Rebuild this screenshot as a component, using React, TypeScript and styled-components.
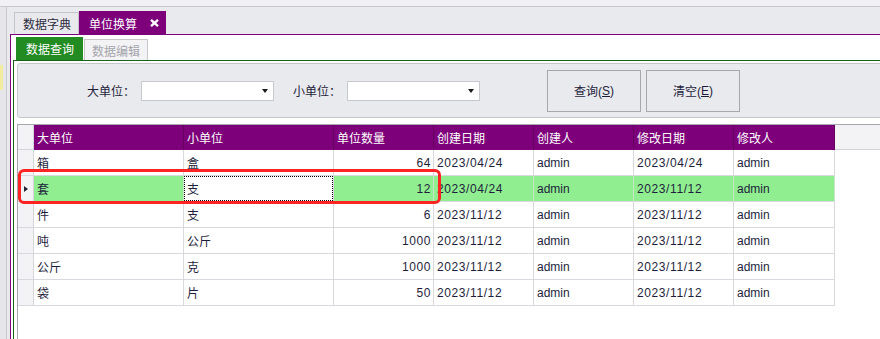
import React from "react";
import styled, { createGlobalStyle } from "styled-components";

const GlobalStyle = createGlobalStyle`
  html, body { margin: 0; padding: 0; background: #e9eaee; }
  * { box-sizing: border-box; }
`;

const PURPLE = "#7d007a";
const TEXT = "#1e1e3c";

const Root = styled.div`
  width: 880px;
  height: 339px;
  display: flex;
  flex-direction: column;
  background: #e9eaee;
  overflow: hidden;
  font-family: "Liberation Sans", "Noto Sans CJK SC", sans-serif;
  font-size: 12px;
  color: ${TEXT};
`;

const TopStrip = styled.div`
  height: 7px;
  flex-shrink: 0;
  background: #f1f1f5;
  border-bottom: 1px solid #c8c8d0;
`;

const Body = styled.div`
  flex: 1;
  display: flex;
  min-height: 0;
`;

const LeftDock = styled.div`
  width: 7px;
  flex-shrink: 0;
  background: #e5e5ea;
  border-right: 1px solid #c8c8d0;
  padding-top: 58px;
`;

const DockMarker = styled.div`
  width: 3px;
  height: 25px;
  background: #f1eb9e;
`;

const Main = styled.div`
  flex: 1;
  min-width: 0;
  display: flex;
  flex-direction: column;
  padding-left: 3px;
`;

const TabStrip = styled.div`
  height: 27px;
  flex-shrink: 0;
  display: flex;
  align-items: flex-end;
  padding-left: 4px;
`;

const DocTab = styled.div<{ $active?: boolean }>`
  height: ${(p) => (p.$active ? 23 : 22)}px;
  display: flex;
  align-items: center;
  border: 1px solid ${(p) => (p.$active ? PURPLE : "#c4c4cc")};
  border-bottom: none;
  background: ${(p) => (p.$active ? PURPLE : "#e9e9ed")};
  color: ${(p) => (p.$active ? "#ffffff" : "#2c2c40")};
  padding: ${(p) => (p.$active ? "0 6px 0 9px" : "0 7px 0 8px")};
  gap: 13px;
  white-space: nowrap;
`;

const CloseIcon = () => (
  <svg width="9" height="8" viewBox="0 0 9 8">
    <path d="M1 0.8 L8 7.2 M8 0.8 L1 7.2" stroke="#ffffff" strokeWidth="2.3" fill="none" />
  </svg>
);

const DocPanel = styled.div`
  flex: 1;
  min-height: 0;
  display: flex;
  flex-direction: column;
  background: #ffffff;
  border-left: 1px solid ${PURPLE};
  border-top: 1px solid ${PURPLE};
  padding-left: 2px;
`;

const InnerTabStrip = styled.div`
  height: 25px;
  flex-shrink: 0;
  display: flex;
  align-items: flex-end;
  padding-left: 3px;
`;

const InnerTab = styled.div<{ $active?: boolean }>`
  height: ${(p) => (p.$active ? 23 : 21)}px;
  display: flex;
  align-items: center;
  white-space: nowrap;
  background: ${(p) => (p.$active ? "#228b22" : "#f3f3f5")};
  color: ${(p) => (p.$active ? "#ffffff" : "#a4a4ac")};
  border: ${(p) => (p.$active ? "none" : "1px solid #c8c8cc")};
  border-bottom: none;
  padding: ${(p) => (p.$active ? "0 9px 0 10px" : "0 7px 0 7px")};
  margin-left: ${(p) => (p.$active ? 0 : 1)}px;
`;

const InnerPanel = styled.div`
  flex: 1;
  min-height: 0;
  display: flex;
  flex-direction: column;
  border-left: 1px solid #17641a;
  border-top: 1px solid #17641a;
  padding: 2px 0 0 3px;
`;

const SearchPanel = styled.div`
  height: 55px;
  flex-shrink: 0;
  display: flex;
  align-items: center;
  background: #e9eaee;
  border: 1px solid #c6c6ce;
  border-radius: 3px;
  margin-right: -6px;
  padding-left: 69px;
`;

const FieldLabel = styled.span<{ $gap?: number }>`
  margin-left: ${(p) => p.$gap ?? 0}px;
  margin-right: 6px;
  white-space: nowrap;
`;

const Combo = styled.div`
  width: 133px;
  height: 20px;
  background: #ffffff;
  border: 1px solid #c8c8d0;
  display: flex;
  align-items: center;
  justify-content: flex-end;
  padding-right: 5px;
`;

const ComboArrow = styled.span`
  width: 0;
  height: 0;
  border-left: 3px solid transparent;
  border-right: 3px solid transparent;
  border-top: 4px solid #1a1a1a;
`;

const ActionButton = styled.div<{ $gap: number }>`
  width: 94px;
  height: 42px;
  margin-left: ${(p) => p.$gap}px;
  border: 1px solid #a8a8ac;
  display: flex;
  align-items: center;
  justify-content: center;
  white-space: nowrap;
`;

const Hotkey = styled.span`
  text-decoration: underline;
`;

const Grid = styled.div`
  flex: 1;
  min-height: 0;
  margin-top: 6px;
  position: relative;
  background: #ffffff;
  border-left: 1px solid #a6a6ae;
  border-top: 1px solid #a6a6ae;
  display: flex;
  flex-direction: column;
`;

const HeaderRow = styled.div`
  height: 25px;
  display: flex;
  flex-shrink: 0;
  background: #f3f3f6;
  border-bottom: 1px solid #d4d4da;
`;

const Row = styled.div`
  height: 26px;
  display: flex;
  flex-shrink: 0;
`;

const RowHead = styled.div<{ $header?: boolean }>`
  width: 16px;
  flex-shrink: 0;
  background: #f3f3f6;
  border-right: 1px solid #d4d4da;
  border-bottom: ${(p) => (p.$header ? "none" : "1px solid #d8d8de")};
  display: flex;
  align-items: center;
  justify-content: center;
`;

const Pointer = styled.span`
  width: 0;
  height: 0;
  border-top: 3.5px solid transparent;
  border-bottom: 3.5px solid transparent;
  border-left: 4px solid #222230;
  margin-left: 1px;
`;

const HeadCell = styled.div<{ $w: number }>`
  width: ${(p) => p.$w}px;
  flex-shrink: 0;
  height: 25px;
  background: ${PURPLE};
  color: #ffffff;
  border-right: 1px solid #65005f;
  display: flex;
  align-items: center;
  padding-left: 3px;
  white-space: nowrap;
`;

const Cell = styled.div<{
  $w: number;
  $right?: boolean;
  $num?: boolean;
  $sel?: boolean;
  $focus?: boolean;
}>`
  width: ${(p) => p.$w}px;
  flex-shrink: 0;
  height: 26px;
  display: flex;
  align-items: center;
  justify-content: ${(p) => (p.$right ? "flex-end" : "flex-start")};
  padding: 0 ${(p) => (p.$right ? 2 : 3)}px 0 3px;
  letter-spacing: ${(p) => (p.$num ? "0.6px" : "0")};
  background: ${(p) => (p.$sel && !p.$focus ? "#90ee90" : "#ffffff")};
  border-right: 1px solid ${(p) => (p.$sel && !p.$focus ? "#c4e8c4" : "#d8d8de")};
  border-bottom: 1px solid #d8d8de;
  white-space: nowrap;
  position: relative;
  ${(p) =>
    p.$focus
      ? `&::after { content: ""; position: absolute; left: 0; top: 0; right: 0; bottom: 0; border: 1px dotted #000; }`
      : ""}
`;

const Annotation = styled.div`
  position: absolute;
  left: 0;
  top: 44px;
  width: 423px;
  height: 35px;
  border: 3px solid #ff2424;
  border-radius: 6px;
  pointer-events: none;
`;

const columns = [
  { title: "大单位", w: 150 },
  { title: "小单位", w: 150 },
  { title: "单位数量", w: 100, right: true, num: true },
  { title: "创建日期", w: 100, num: true },
  { title: "创建人", w: 100 },
  { title: "修改日期", w: 100, num: true },
  { title: "修改人", w: 101 },
];

const rows = [
  ["箱", "盒", "64", "2023/04/24", "admin", "2023/04/24", "admin"],
  ["套", "支", "12", "2023/04/24", "admin", "2023/11/12", "admin"],
  ["件", "支", "6", "2023/11/12", "admin", "2023/11/12", "admin"],
  ["吨", "公斤", "1000", "2023/11/12", "admin", "2023/11/12", "admin"],
  ["公斤", "克", "1000", "2023/11/12", "admin", "2023/11/12", "admin"],
  ["袋", "片", "50", "2023/11/12", "admin", "2023/11/12", "admin"],
];

const SELECTED = 1;
const FOCUS_COL = 1;

export default function App() {
  return (
    <>
      <GlobalStyle />
      <Root>
        <TopStrip />
        <Body>
          <LeftDock>
            <DockMarker />
          </LeftDock>
          <Main>
            <TabStrip>
              <DocTab>数据字典</DocTab>
              <DocTab $active>
                单位换算
                <CloseIcon />
              </DocTab>
            </TabStrip>
            <DocPanel>
              <InnerTabStrip>
                <InnerTab $active>数据查询</InnerTab>
                <InnerTab>数据编辑</InnerTab>
              </InnerTabStrip>
              <InnerPanel>
                <SearchPanel>
                  <FieldLabel>大单位：</FieldLabel>
                  <Combo>
                    <ComboArrow />
                  </Combo>
                  <FieldLabel $gap={19}>小单位：</FieldLabel>
                  <Combo>
                    <ComboArrow />
                  </Combo>
                  <ActionButton $gap={67}>
                    查询(<Hotkey>S</Hotkey>)
                  </ActionButton>
                  <ActionButton $gap={5}>
                    清空(<Hotkey>E</Hotkey>)
                  </ActionButton>
                </SearchPanel>
                <Grid>
                  <HeaderRow>
                    <RowHead $header />
                    {columns.map((c) => (
                      <HeadCell key={c.title} $w={c.w}>
                        {c.title}
                      </HeadCell>
                    ))}
                  </HeaderRow>
                  {rows.map((r, i) => (
                    <Row key={i}>
                      <RowHead>{i === SELECTED && <Pointer />}</RowHead>
                      {r.map((v, j) => (
                        <Cell
                          key={j}
                          $w={columns[j].w}
                          $right={columns[j].right}
                          $num={columns[j].num}
                          $sel={i === SELECTED}
                          $focus={i === SELECTED && j === FOCUS_COL}
                        >
                          {v}
                        </Cell>
                      ))}
                    </Row>
                  ))}
                  <Annotation />
                </Grid>
              </InnerPanel>
            </DocPanel>
          </Main>
        </Body>
      </Root>
    </>
  );
}
